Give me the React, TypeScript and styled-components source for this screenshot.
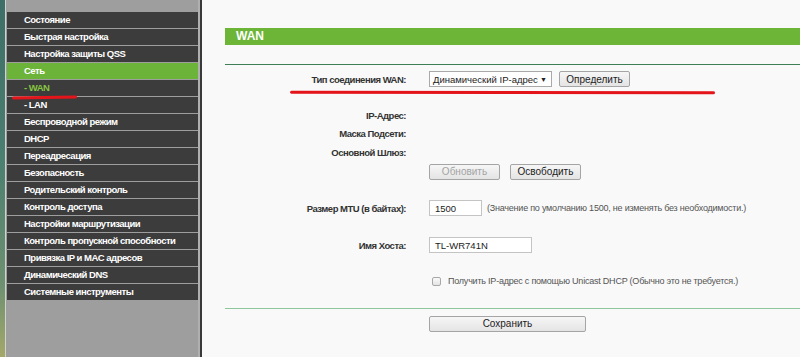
import React from "react";
import styled, { createGlobalStyle } from "styled-components";

const Global = createGlobalStyle`
  html, body { margin: 0; padding: 0; }
  body { background: #f9f9f9; font-family: "Liberation Sans", Arial, sans-serif; }
  #root { height: 357px; overflow: hidden; }
`;

const Page = styled.div`
  display: flex;
  height: 357px;
  width: 800px;
  position: relative;
  overflow: hidden;
`;

const WindowEdge = styled.div`
  width: 5px;
  flex: none;
  background: linear-gradient(180deg, #3e6e67 0%, #4b7f70 45%, #6e9070 80%, #a4a86a 100%);
`;

const Sidebar = styled.nav`
  width: 191px;
  flex: none;
  background: #9e9e9e;
  border-left: 1px solid #cfd3cf;
  border-right: 2px solid #b0b0b0;
  padding: 12px 0 0 1px;
  display: flex;
  flex-direction: column;
  gap: 1px;
  position: relative;
`;

const MenuItem = styled.div<{ $active?: boolean; $sub?: boolean }>`
  height: 16px;
  line-height: 16px;
  padding-left: 17px;
  background: ${(p) => (p.$active ? "#6cb33a" : "#3c3c3c")};
  color: ${(p) => (p.$sub ? "#86c540" : "#ffffff")};
  font-size: 9.5px;
  font-weight: bold;
  letter-spacing: -0.5px;
  white-space: nowrap;
  overflow: hidden;
`;

const Content = styled.main`
  flex: 1;
  border-left: 2px solid #3a3a3a;
  padding-left: 23px;
  background: #f9f9f9;
  display: flex;
  flex-direction: column;
  position: relative;
`;

const TitleBar = styled.div`
  margin-top: 28px;
  height: 17px;
  line-height: 17px;
  background: #6cb536;
  color: #ffffff;
  font-size: 12px;
  font-weight: bold;
  padding-left: 11px;
`;

const Rule = styled.div<{ $top: number; $color: string }>`
  margin-top: ${(p) => p.$top}px;
  height: 1px;
  background: ${(p) => p.$color};
`;

const Row = styled.div<{ $top: number; $h: number }>`
  margin-top: ${(p) => p.$top}px;
  height: ${(p) => p.$h}px;
  display: grid;
  grid-template-columns: 181px 1fr;
  column-gap: 23px;
  align-items: center;
`;

const Label = styled.div`
  text-align: right;
  font-size: 9.5px;
  font-weight: bold;
  letter-spacing: -0.5px;
  color: #333333;
  white-space: nowrap;
`;

const Field = styled.div`
  display: flex;
  align-items: center;
  height: 100%;
`;

const SelectBox = styled.div`
  box-sizing: border-box;
  width: 123px;
  height: 16px;
  border: 1px solid #a9a9a9;
  background: #ffffff;
  font-size: 9.5px;
  color: #222;
  display: flex;
  align-items: center;
  justify-content: space-between;
  padding: 0 4px 0 3px;
  white-space: nowrap;
`;

const Arrow = styled.span`
  font-size: 7px;
  color: #222;
`;

const Button = styled.div<{ $w: number; $disabled?: boolean; $ml?: number }>`
  box-sizing: border-box;
  width: ${(p) => p.$w}px;
  height: 16px;
  margin-left: ${(p) => p.$ml ?? 0}px;
  border: 1px solid #a5a5a5;
  border-radius: 2px;
  background: linear-gradient(180deg, #f6f6f6 0%, #e4e4e4 100%);
  color: ${(p) => (p.$disabled ? "#a3a3a3" : "#222222")};
  font-size: 10px;
  display: flex;
  align-items: center;
  justify-content: center;
`;

const TextInput = styled.div<{ $w: number }>`
  box-sizing: border-box;
  width: ${(p) => p.$w}px;
  height: 16px;
  border: 1px solid #c4c4c4;
  background: #ffffff;
  font-size: 9.5px;
  color: #222;
  padding-left: 5px;
  display: flex;
  align-items: center;
`;

const Note = styled.span<{ $ml: number }>`
  margin-left: ${(p) => p.$ml}px;
  font-size: 9px;
  letter-spacing: -0.22px;
  color: #555555;
  white-space: nowrap;
`;

const CheckBox = styled.span`
  box-sizing: border-box;
  width: 9px;
  height: 9px;
  margin-left: 3px;
  border: 1px solid #a8a8a8;
  border-radius: 2px;
  background: linear-gradient(180deg, #fafafa, #e4e4e4);
`;

const RedMark = styled.div<{ $x: number; $y: number; $w: number; $rot?: number }>`
  position: absolute;
  left: ${(p) => p.$x}px;
  top: ${(p) => p.$y}px;
  width: ${(p) => p.$w}px;
  height: 3px;
  border-radius: 2px;
  background: #e4141b;
  transform: rotate(${(p) => p.$rot ?? 0}deg);
`;

const menu: { t: string; active?: boolean; sub?: boolean }[] = [
  { t: "Состояние" },
  { t: "Быстрая настройка" },
  { t: "Настройка защиты QSS" },
  { t: "Сеть", active: true },
  { t: "- WAN", sub: true },
  { t: "- LAN" },
  { t: "Беспроводной режим" },
  { t: "DHCP" },
  { t: "Переадресация" },
  { t: "Безопасность" },
  { t: "Родительский контроль" },
  { t: "Контроль доступа" },
  { t: "Настройки маршрутизации" },
  { t: "Контроль пропускной способности" },
  { t: "Привязка IP и MAC адресов" },
  { t: "Динамический DNS" },
  { t: "Системные инструменты" },
];

export default function App() {
  return (
    <Page>
      <Global />
      <WindowEdge />
      <Sidebar>
        {menu.map((m) => (
          <MenuItem key={m.t} $active={m.active} $sub={m.sub}>
            {m.t}
          </MenuItem>
        ))}
        <RedMark $x={6} $y={96} $w={65} $rot={-1} />
      </Sidebar>
      <Content>
        <TitleBar>WAN</TitleBar>
        <Rule $top={19} $color="#3f7f57" />
        <Row $top={6} $h={16}>
          <Label>Тип соединения WAN:</Label>
          <Field>
            <SelectBox>
              <span>Динамический IP-адрес</span>
              <Arrow>▼</Arrow>
            </SelectBox>
            <Button $w={71} $ml={7}>Определить</Button>
          </Field>
        </Row>
        <RedMark $x={88} $y={91} $w={425} $rot={0.1} />
        <Row $top={19} $h={18}>
          <Label>IP-Адрес:</Label>
          <Field />
        </Row>
        <Row $top={0} $h={18}>
          <Label>Маска Подсети:</Label>
          <Field />
        </Row>
        <Row $top={1} $h={18}>
          <Label>Основной Шлюз:</Label>
          <Field />
        </Row>
        <Row $top={2} $h={17}>
          <span />
          <Field>
            <Button $w={71} $disabled>Обновить</Button>
            <Button $w={71} $ml={10}>Освободить</Button>
          </Field>
        </Row>
        <Row $top={20} $h={16}>
          <Label>Размер MTU (в байтах):</Label>
          <Field>
            <TextInput $w={53}>1500</TextInput>
            <Note $ml={5}>(Значение по умолчанию 1500, не изменять без необходимости.)</Note>
          </Field>
        </Row>
        <Row $top={21} $h={16}>
          <Label>Имя Хоста:</Label>
          <Field>
            <TextInput $w={103}>TL-WR741N</TextInput>
          </Field>
        </Row>
        <Row $top={20} $h={16}>
          <span />
          <Field>
            <CheckBox />
            <Note $ml={7}>Получить IP-адрес с помощью Unicast DHCP (Обычно это не требуется.)</Note>
          </Field>
        </Row>
        <Rule $top={19} $color="#8cc79e" />
        <Row $top={6} $h={17}>
          <span />
          <Field>
            <Button $w={157}>Сохранить</Button>
          </Field>
        </Row>
      </Content>
    </Page>
  );
}
